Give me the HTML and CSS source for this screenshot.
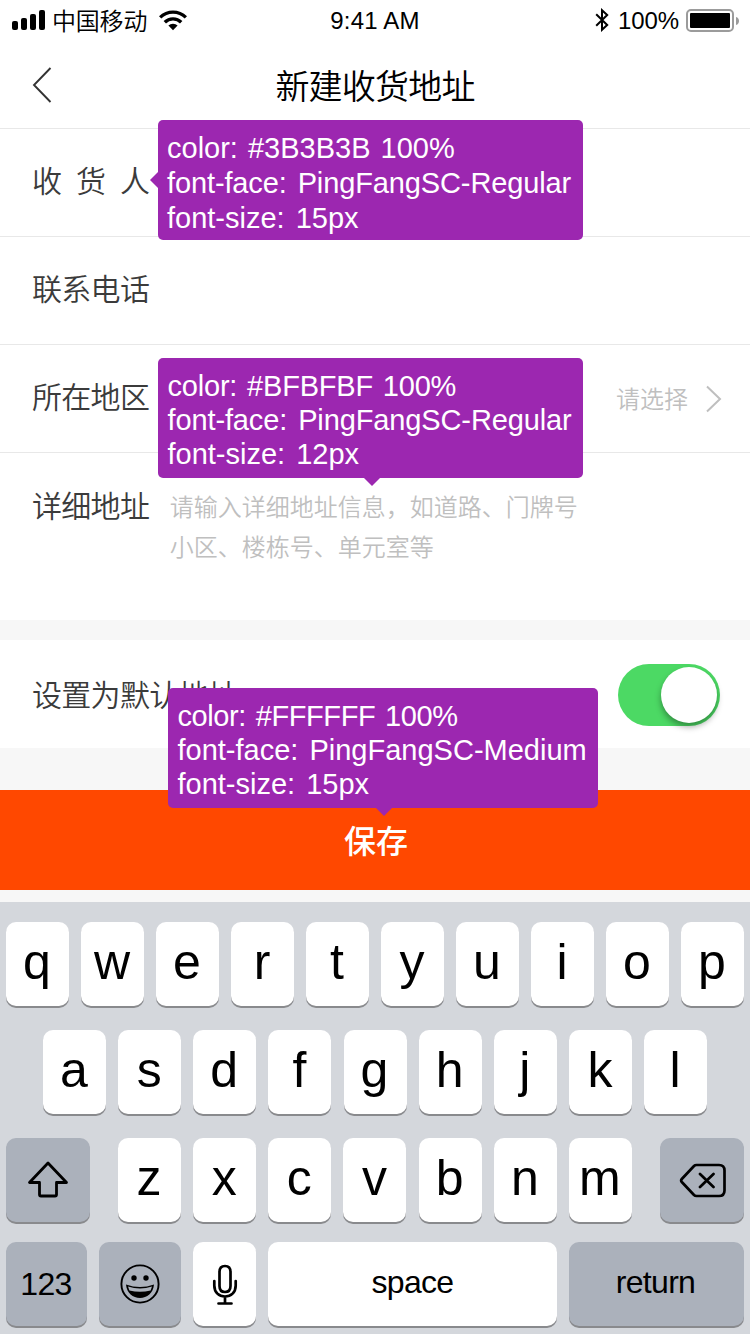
FILE: index.html
```html
<!DOCTYPE html>
<html lang="zh-CN">
<head>
<meta charset="utf-8">
<title>新建收货地址</title>
<link rel="stylesheet" href="styles.css">
</head>
<body>
<main class="screen">
  <div class="status">
    <div class="status-left">
      <svg class="signal" width="34" height="22" viewBox="0 0 34 22"><rect x="0" y="12" width="6" height="9" rx="2"/><rect x="9" y="9" width="6" height="12" rx="2"/><rect x="18" y="5" width="6" height="16" rx="2"/><rect x="27" y="1" width="6" height="20" rx="2"/></svg>
      <span class="carrier">中国移动</span>
      <svg class="wifi" width="30" height="22" viewBox="0 0 30 22"><path d="M1 7.2a20 20 0 0 1 28 0l-2.3 2.4a16.7 16.7 0 0 0-23.4 0z"/><path d="M5.6 12a13.4 13.4 0 0 1 18.8 0l-2.4 2.4a10 10 0 0 0-14 0z"/><path d="M10.4 16.6a6.5 6.5 0 0 1 9.2 0L15 21.2z"/></svg>
    </div>
    <span class="clock">9:41 AM</span>
    <div class="status-right">
      <svg class="bluetooth" width="15" height="24" viewBox="0 0 15 24"><path d="M1.2 6.2 12.2 17 7 21.8V2.2L12.2 7 1.2 17.8" fill="none" stroke="#000" stroke-width="2"/></svg>
      <span class="percent">100%</span>
      <svg class="battery" width="54" height="24" viewBox="0 0 54 24"><rect x="1" y="1" width="46" height="21" rx="4" fill="none" stroke="#9b9b9b" stroke-width="2"/><rect x="4" y="4" width="40" height="15" rx="1"/><path d="M50 8c4 1 4 7 0 8z" fill="#9b9b9b"/></svg>
    </div>
  </div>
  <header class="nav">
    <svg class="back" width="20" height="38" viewBox="0 0 20 38"><path d="M18.500 3 2 20 18.500 37" fill="none" stroke="#333" stroke-width="1.9"/></svg>
    <h1 class="title">新建收货地址</h1>
  </header>
  <section class="form">
    <div class="row">
      <span class="label label-wide">收货人</span>
      <div class="note note-name"><span class="value">color: #3B3B3B 100%</span><span class="face">font-face: PingFangSC-Regular</span><span>font-size: 15px</span></div>
    </div>
    <div class="row"><span class="label">联系电话</span></div>
    <div class="row">
      <span class="label">所在地区</span>
      <span class="select">请选择</span>
      <svg class="chevron" width="16" height="28" viewBox="0 0 16 28"><path d="M1 1.5 14 14 1 26.5" fill="none" stroke="#bfbfbf" stroke-width="2"/></svg>
    </div>
    <div class="row row-detail">
      <span class="label">详细地址</span>
      <p class="placeholder">请输入详细地址信息，如道路、门牌号<br>小区、楼栋号、单元室等</p>
      <div class="note note-down note-detail"><span class="value value-tight">color: #BFBFBF 100%</span><span class="face">font-face: PingFangSC-Regular</span><span>font-size: 12px</span></div>
    </div>
  </section>
  <section class="row row-default">
    <span class="label">设置为默认地址</span>
    <span class="switch"><span class="knob"></span></span>
  </section>
  <div class="save">
    <span class="save-text">保存</span>
    <div class="note note-down note-save"><span class="value value-tighter">color: #FFFFFF 100%</span><span>font-face: PingFangSC-Medium</span><span>font-size: 15px</span></div>
  </div>
  <section class="keyboard">
    <div class="keys"><b>q</b><b>w</b><b>e</b><b>r</b><b>t</b><b>y</b><b>u</b><b>i</b><b>o</b><b>p</b></div>
    <div class="keys keys-home"><b>a</b><b>s</b><b>d</b><b>f</b><b>g</b><b>h</b><b>j</b><b>k</b><b>l</b></div>
    <div class="keys keys-low">
      <b class="dark side"><svg width="42" height="38" viewBox="0 0 42 38"><path d="M21 2 2.5 21.5H12.500V33.5Q12.500 35 14 35H28Q29.500 35 29.500 33.5V21.5H39.5Z" fill="none" stroke="#000" stroke-width="2.8" stroke-linejoin="round"/></svg></b>
      <div class="letters"><b>z</b><b>x</b><b>c</b><b>v</b><b>b</b><b>n</b><b>m</b></div>
      <b class="dark side delete"><svg width="48" height="36" viewBox="0 0 48 36"><path d="M17.5 2H40Q45.5 2 45.5 7.5V27.5Q45.5 33 40 33H17.5Q16 33 15 32L2.8 19Q1.5 17.5 2.8 16L15 3Q16 2 17.5 2ZM21 11 34.5 24M34.5 11 21 24" fill="none" stroke="#000" stroke-width="2.7" stroke-linecap="round"/></svg></b>
    </div>
    <div class="keys keys-bottom">
      <b class="dark text num">123</b>
      <b class="dark emoji"><svg width="40" height="40" viewBox="0 0 40 40"><circle cx="20" cy="20" r="18.6" fill="none" stroke="#000" stroke-width="1.9"/><circle cx="14" cy="14" r="2.7"/><circle cx="26" cy="14" r="2.7"/><path d="M6 20.500Q20 25.5 34 20.500C33.300 29 27 34 20 34S6.700 29 6 20.500Z"/><path d="M8 22.500Q20 26.500 32 22.500L30.600 26.400Q20 29.300 9.400 26.400Z" fill="#abb1bb"/></svg></b>
      <b class="mic"><svg width="26" height="42" viewBox="0 0 26 42"><path d="M7.500 8Q7.500 2 13 2T18.500 8V22Q18.500 28 13 28T7.500 22ZM2.300 17V21.500C2.300 28.500 7 32.500 13 32.500S23.700 28.500 23.700 21.500V17M13 32.500V39.500M6.500 39.500H19.500" fill="none" stroke="#000" stroke-width="2.700" stroke-linecap="round"/></svg></b>
      <b class="text space">space</b>
      <b class="dark text return">return</b>
    </div>
  </section>
</main>
</body>
</html>
```
FILE: styles.css
```css
* { box-sizing: border-box; }
body { margin: 0; font-family: "Liberation Sans", "Noto Sans CJK SC", sans-serif; color: #000; }
svg { display: block; flex: none; }
.screen { width: 750px; height: 1334px; background: #f7f7f7; overflow: hidden; }

.status { height: 40px; background: #fff; display: grid; grid-template-columns: 1fr auto 1fr; align-items: start; font-size: 24px; line-height: 40px; white-space: nowrap; }
.status-left, .status-right { display: flex; align-items: flex-start; }
.status-left { padding-left: 12px; }
.status-right { justify-content: flex-end; padding-right: 10px; }
.signal { margin-top: 9px; }
.carrier { font-family: "Noto Sans CJK SC", sans-serif; font-weight: 350; margin-left: 6px; letter-spacing: -.2px; }
.wifi { margin: 9px 0 0 11px; }
.clock { padding-top: 1px; letter-spacing: .2px; }
.bluetooth { margin-top: 8px; }
.percent { padding-top: 1px; margin: 0 7px 0 8px; letter-spacing: -.1px; }
.battery { margin-top: 9px; }

.nav { height: 88px; padding: 0 32px; background: #fff; display: grid; grid-template-columns: 20px 1fr 20px; align-items: center; }
.title { margin: 0; padding-top: 2px; text-align: center; font: 350 34px/50px "Noto Sans CJK SC", sans-serif; letter-spacing: -.8px; }

.row { position: relative; height: 108px; padding: 0 30px 0 32px; display: flex; align-items: center; background: #fff; border-top: 1px solid #e8e8e8; }
.label { padding-bottom: 7px; font: 350 30px/44px "Noto Sans CJK SC", sans-serif; letter-spacing: -.7px; color: #3b3b3b; white-space: nowrap; }
.label-wide { letter-spacing: 14px; }
.select { margin-left: auto; padding-bottom: 1px; font: 350 24px/36px "Noto Sans CJK SC", sans-serif; color: #bfbfbf; }
.chevron { margin: 1px -1.500px 0 17.500px; }
.row-detail { height: 168px; align-items: flex-start; padding-top: 29px; }
.placeholder { margin: 4px 0 0 20.500px; font: 350 24px/40px "Noto Sans CJK SC", sans-serif; color: #bfbfbf; }
.row-default { margin-top: 20px; border-top: 0; }
.row-default .label { padding-bottom: 2px; }
.switch { margin: 2px 0 0 auto; width: 102px; height: 62px; border-radius: 31px; background: #4cd964; padding: 3px; display: flex; justify-content: flex-end; }
.knob { width: 56px; height: 56px; border-radius: 50%; background: #fff; box-shadow: 0 4px 6px rgba(0,0,0,.35); }

.save { position: relative; margin-top: 42px; height: 100px; background: #ff4800; display: flex; justify-content: center; align-items: center; }
.save-text { padding: 0 0 3px 2px; font: 500 32px/48px "Noto Sans CJK SC", sans-serif; color: #fff; }

/* Style annotations laid over the form */
.note { position: absolute; z-index: 2; width: 425px; height: 120px; padding: 11px 0 0 9.500px; border-radius: 5px; background: #9c27b0; color: #fff; font-size: 29px; line-height: 34px; white-space: nowrap; }
.note span { display: block; word-spacing: 3px; }
.note .value { word-spacing: 2px; }
.note .value-tight { letter-spacing: -.2px; }
.note .value-tighter { letter-spacing: -.4px; }
.note .face { letter-spacing: -.12px; }
.note::after { content: ""; position: absolute; border: 8px solid transparent; }
.note-name { left: 157.500px; top: -9px; line-height: 35px; }
.note-name::after { left: -16px; top: 52px; border-right-color: #9c27b0; }
.note-detail { left: 158px; top: -95px; }
.note-save { left: 168px; top: -102px; width: 429.500px; }
.note-down::after { top: 120px; left: 206px; border-top-color: #9c27b0; }
.note-save::after { left: 208px; }

.keyboard { margin-top: 12px; height: 432px; padding: 20px 6px 0; background: #d4d7dc; display: flex; flex-direction: column; }
.keys { display: flex; justify-content: space-between; height: 84px; margin-bottom: 24px; }
.keys-home { padding: 0 37px; }
.keys-low { margin-bottom: 20px; }
.letters { display: flex; justify-content: space-between; width: 514px; }
.keys b { width: 63px; height: 84px; border-radius: 10px; background: #fff; box-shadow: 0 2px 0 #898a8d; display: flex; justify-content: center; align-items: center; font-size: 50px; font-weight: 400; line-height: 78px; padding-bottom: 5px; padding-right: 1px; }
.keys .dark { background: #abb1bb; }
.keys .side { width: 84px; padding: 0; }
.keys .delete { padding: 1px 0 0 1px; }
.keys .num { width: 81px; }
.keys .emoji { width: 82px; padding: 0 1px 1px 0; }
.keys .mic { padding: 2px 0 0; }
.keys .text { font-size: 32px; letter-spacing: -.7px; padding-bottom: 4px; }
.keys .num { padding-bottom: 0; }
.keys .space { width: 289px; padding-right: 0; }
.keys .return { width: 175px; padding-right: 2px; }
```
